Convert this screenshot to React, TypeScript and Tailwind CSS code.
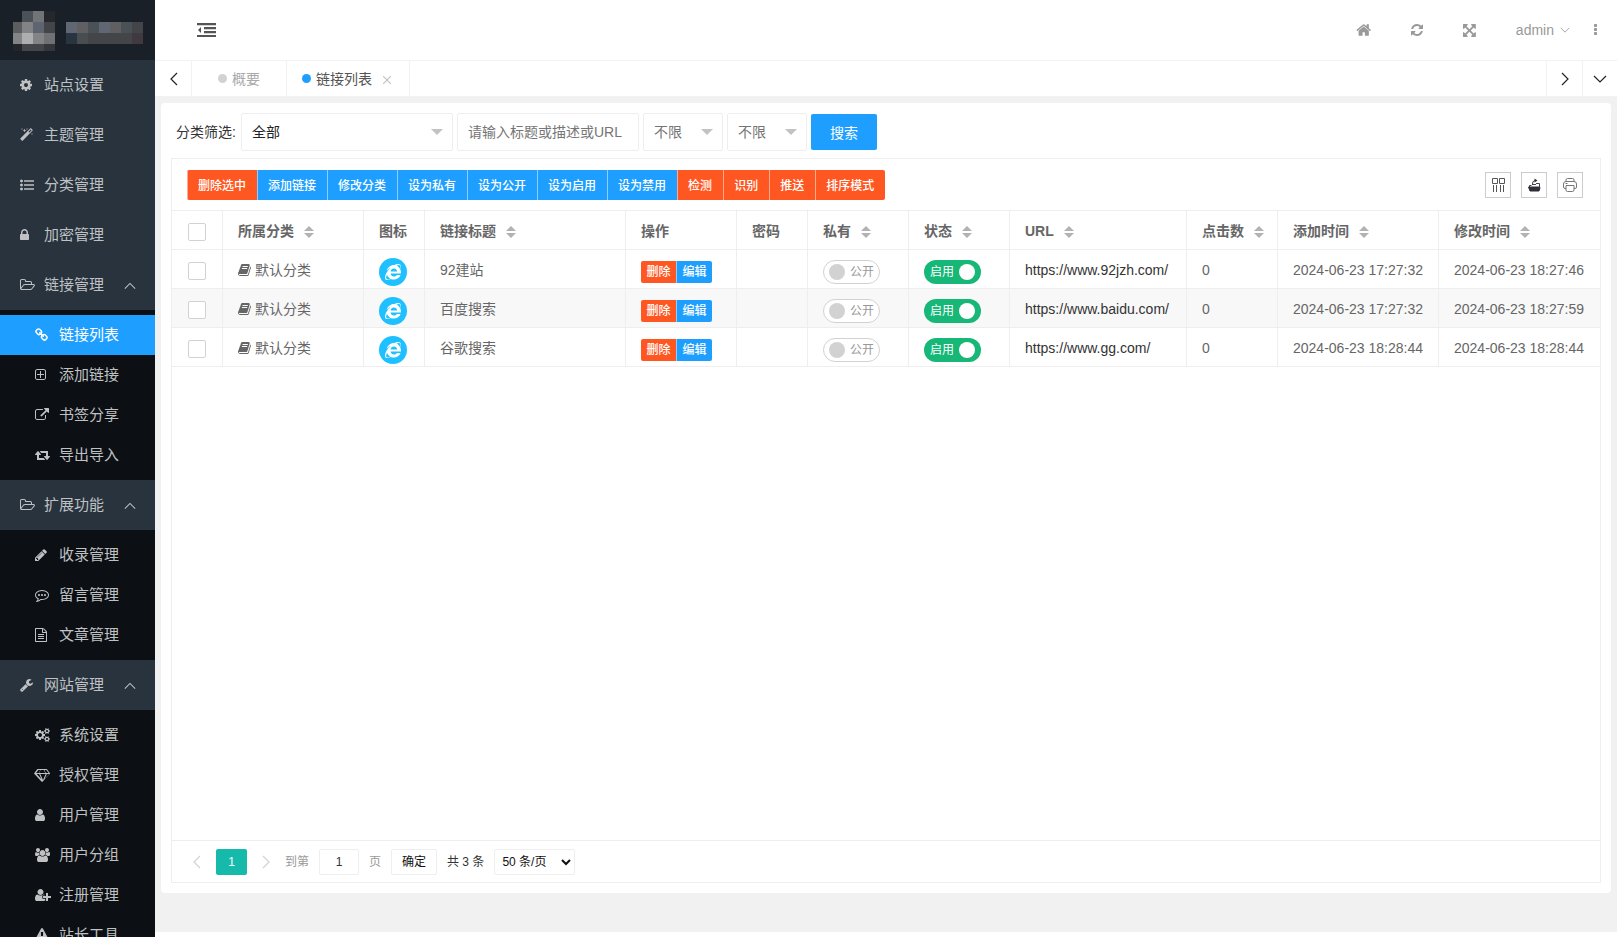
import * as React from "react";
import { FaInternetExplorer } from "react-icons/fa";

type IconName = keyof typeof ICONS;

// x: left edge of the glyph, w: advance width, d: outline on a 1792 unit em
const ICONS = {
  cog: {
    x: 128,
    w: 1536,
    d: "M1152 896q0-106-75-181t-181-75-181 75-75 181 75 181 181 75 181-75 75-181zm512-109v222q0 12-8 23t-20 13l-185 28q-19 54-39 91 35 50 107 138 10 12 10 25t-9 23q-27 37-99 108t-94 71q-12 0-26-9l-138-108q-44 23-91 38-16 136-29 186-7 28-36 28h-222q-14 0-24.5-8.5t-11.5-21.5l-28-184q-49-16-90-37l-141 107q-10 9-25 9-14 0-25-11-126-114-165-168-7-10-7-23 0-12 8-23 15-21 51-66.5t54-70.5q-27-50-41-99l-183-27q-13-2-21-12.5t-8-23.5v-222q0-12 8-23t19-13l186-28q14-46 39-92-40-57-107-138-10-12-10-24 0-10 9-23 26-36 98.5-107.5t94.5-71.5q13 0 26 10l138 107q44-23 91-38 16-136 29-186 7-28 36-28h222q14 0 24.5 8.5t11.5 21.5l28 184q49 16 90 37l142-107q9-9 24-9 13 0 25 10 129 119 165 170 7 8 7 22 0 12-8 23-15 21-51 66.5t-54 70.5q26 50 41 98l183 28q13 2 21 12.5t8 23.5z",
  },
  magic: {
    x: 64,
    w: 1664,
    d: "M1254 581l293-293-107-107-293 293zm447-293q0 27-18 45l-1286 1286q-18 18-45 18t-45-18l-198-198q-18-18-18-45t18-45l1286-1286q18-18 45-18t45 18l198 198q18 18 18 45zm-1351-190l98 30-98 30-30 98-30-98-98-30 98-30 30-98zm350 162l196 60-196 60-60 196-60-196-196-60 196-60 60-196zm930 478l98 30-98 30-30 98-30-98-98-30 98-30 30-98zm-640-640l98 30-98 30-30 98-30-98-98-30 98-30 30-98z",
  },
  list: {
    x: 0,
    w: 1792,
    d: "M384 1408q0 80-56 136t-136 56-136-56-56-136 56-136 136-56 136 56 56 136zm0-512q0 80-56 136t-136 56-136-56-56-136 56-136 136-56 136 56 56 136zm0-512q0 80-56 136t-136 56-136-56-56-136 56-136 136-56 136 56 56 136zM512 288h1248q32 0 32 32v128q0 32-32 32h-1248zM512 800h1248q32 0 32 32v128q0 32-32 32h-1248zM512 1312h1248q32 0 32 32v128q0 32-32 32h-1248z",
  },
  lock: {
    x: 320,
    w: 1152,
    d: "M640 768h512v-192q0-106-75-181t-181-75-181 75-75 181v192zm832 96v576q0 40-28 68t-68 28h-960q-40 0-68-28t-28-68v-576q0-40 28-68t68-28h32v-192q0-184 132-316t316-132 316 132 132 316v192h32q40 0 68 28t28 68z",
  },
  folder: {
    x: 64,
    w: 1920,
    d: "M1845 931q0-35-53-35h-1088q-40 0-85.5 21.5t-71.5 52.5l-294 363q-18 24-18 40 0 35 53 35h1088q40 0 86-22t71-53l294-363q18-22 18-39zm-1141-163h768v-160q0-40-28-68t-68-28h-576q-40 0-68-28t-28-68v-64q0-40-28-68t-68-28h-320q-40 0-68 28t-28 68v853l256-315q44-53 116-87.5t140-34.5zm1269 163q0 62-46 120l-295 363q-43 53-116 87.5t-140 34.5h-1088q-92 0-158-66t-66-158v-960q0-92 66-158t158-66h320q92 0 158 66t66 158v32h544q92 0 158 66t66 158v160h192q54 0 99 24.5t67 70.5q15 32 15 68z",
  },
  link: {
    x: 64,
    w: 1664,
    d: "M1520 1216q0-40-28-68l-208-208q-28-28-68-28-42 0-72 32 3 3 19 18.5t21.5 21.5 15 19 13 25.5 3.5 27.5q0 40-28 68t-68 28q-15 0-27.5-3.5t-25.5-13-19-15-21.5-21.5-18.5-19q-33 31-33 73 0 40 28 68l206 207q27 27 68 27 40 0 68-26l147-146q28-28 28-67zm-703-705q0-40-28-68l-206-207q-28-28-68-28-39 0-68 27l-147 146q-28 28-28 67 0 40 28 68l208 208q27 27 68 27 42 0 72-31-3-3-19-18.5t-21.5-21.5-15-19-13-25.5-3.5-27.5q0-40 28-68t68-28q15 0 27.5 3.5t25.5 13 19 15 21.5 21.5 18.5 19q33-31 33-73zm895 705q0 120-85 203l-147 146q-83 83-203 83-121 0-204-85l-206-207q-83-83-83-203 0-123 88-209l-88-88q-86 88-208 88-120 0-204-84l-208-208q-84-84-84-204t85-203l147-146q83-83 203-83 121 0 204 85l206 207q83 83 83 203 0 123-88 209l88 88q86-88 208-88 120 0 204 84l208 208q84 84 84 204z",
  },
  plusSquare: {
    x: 192,
    w: 1408,
    d: "M1344 800v64q0 14-9 23t-23 9h-352v352q0 14-9 23t-23 9h-64q-14 0-23-9t-9-23v-352h-352q-14 0-23-9t-9-23v-64q0-14 9-23t23-9h352v-352q0-14 9-23t23-9h64q14 0 23 9t9 23v352h352q14 0 23 9t9 23zm128 448v-832q0-66-47-113t-113-47h-832q-66 0-113 47t-47 113v832q0 66 47 113t113 47h832q66 0 113-47t47-113zm128-832v832q0 119-84.5 203.5t-203.5 84.5h-832q-119 0-203.5-84.5t-84.5-203.5v-832q0-119 84.5-203.5t203.5-84.5h832q119 0 203.5 84.5t84.5 203.5z",
  },
  external: {
    x: 0,
    w: 1792,
    d: "M1408 928v320q0 119-84.5 203.5t-203.5 84.5h-832q-119 0-203.5-84.5t-84.5-203.5v-832q0-119 84.5-203.5t203.5-84.5h704q14 0 23 9t9 23v64q0 14-9 23t-23 9h-704q-66 0-113 47t-47 113v832q0 66 47 113t113 47h832q66 0 113-47t47-113v-320q0-14 9-23t23-9h64q14 0 23 9t9 23zm384-864v512q0 26-19 45t-45 19-45-19l-176-176-652 652q-10 10-23 10t-23-10l-114-114q-10-10-10-23t10-23l652-652-176-176q-19-19-19-45t19-45 45-19h512q26 0 45 19t19 45z",
  },
  retweet: {
    x: 0,
    w: 1920,
    d: "M1280 1504q0 13-9.5 22.5t-22.5 9.5h-960q-8 0-13.5-2t-9-7-5.5-8-3-11.5-1-11.5v-600h-192q-26 0-45-19t-19-45q0-24 15-41l320-384q19-22 49-22t49 22l320 384q15 17 15 41 0 26-19 45t-45 19h-192v384h576q16 0 25 11l160 192q7 10 7 21zm640-416q0 24-15 41l-320 384q-20 23-49 23t-49-23l-320-384q-15-17-15-41 0-26 19-45t45-19h192v-384h-576q-16 0-25-12l-160-192q-7-9-7-20 0-13 9.5-22.5t22.5-9.5h960q8 0 13.5 2t9 7 5.5 8 3 11.5 1 11.5v600h192q26 0 45 19t19 45z",
  },
  pencil: {
    x: 128,
    w: 1536,
    d: "M491 1536l91-91-235-235-91 91v107h128v128h107zm523-928q0-22-22-22-10 0-17 7l-542 542q-7 7-7 17 0 22 22 22 10 0 17-7l542-542q7-7 7-17zm-54-192l416 416-832 832h-416v-416zm683 96q0 53-37 90l-166 166-416-416 166-165q36-38 90-38 53 0 91 38l235 234q37 39 37 91z",
  },
  comment: {
    x: 0,
    w: 1792,
    d: "M640 896q0 53-37.5 90.5t-90.5 37.5-90.5-37.5-37.5-90.5 37.5-90.5 90.5-37.5 90.5 37.5 37.5 90.5zm384 0q0 53-37.5 90.5t-90.5 37.5-90.5-37.5-37.5-90.5 37.5-90.5 90.5-37.5 90.5 37.5 37.5 90.5zm384 0q0 53-37.5 90.5t-90.5 37.5-90.5-37.5-37.5-90.5 37.5-90.5 90.5-37.5 90.5 37.5 37.5 90.5zm-512-512q-204 0-381.5 69.5t-282 187.5-104.5 255q0 112 71.5 213.5t201.5 175.5l87 50-27 96q-24 91-70 172 152-63 275-171l43-38 57 6q69 8 130 8 204 0 381.5-69.5t282-187.5 104.5-255-104.5-255-282-187.5-381.5-69.5zm896 512q0 174-120 321.5t-326 233-450 85.5q-70 0-145-8-198 175-460 242-49 14-114 22h-5q-15 0-27-10.5t-16-27.5v-1q-3-4-.5-12t2-10 4.5-9.5l6-9 7-8.5 8-9q7-8 31-34.5t34.5-38 31-39.5 32.5-51 27-59 26-76q-157-89-247.5-220t-90.5-281q0-174 120-321.5t326-233 450-85.5 450 85.5 326 233 120 321.5z",
  },
  file: {
    x: 128,
    w: 1536,
    d: "M1596 380q28 28 48 76t20 88v1152q0 40-28 68t-68 28h-1344q-40 0-68-28t-28-68v-1600q0-40 28-68t68-28h896q40 0 88 20t76 48zm-444-244v376h376q-10-29-22-41l-313-313q-12-12-41-22zm384 1528v-1024h-416q-40 0-68-28t-28-68v-416h-768v1536h1280zm-1024-864q0-14 9-23t23-9h704q14 0 23 9t9 23v64q0 14-9 23t-23 9h-704q-14 0-23-9t-9-23v-64zm736 224q14 0 23 9t9 23v64q0 14-9 23t-23 9h-704q-14 0-23-9t-9-23v-64q0-14 9-23t23-9h704zm0 256q14 0 23 9t9 23v64q0 14-9 23t-23 9h-704q-14 0-23-9t-9-23v-64q0-14 9-23t23-9h704z",
  },
  wrench: {
    x: 64,
    w: 1664,
    d: "M448 1472q0-26-19-45t-45-19-45 19-19 45 19 45 45 19 45-19 19-45zm644-420l-682 682q-37 37-90 37-52 0-91-37l-106-108q-38-36-38-90 0-53 38-91l681-681q39 98 114.5 173.5t173.5 114.5zm634-435q0 39-23 106-47 134-164.5 217.5t-258.5 83.5q-185 0-316.5-131.5t-131.5-316.5 131.5-316.5 316.5-131.5q58 0 121.5 16.5t107.5 46.5q16 11 16 28t-16 28l-293 169v224l193 107q5-3 79-48.5t135.5-81 70.5-35.5q15 0 23.5 10t8.5 25z",
  },
  cogs: {
    x: 0,
    w: 1920,
    d: "M896 896q0-106-75-181t-181-75-181 75-75 181 75 181 181 75 181-75 75-181zm768 512q0-52-38-90t-90-38-90 38-38 90q0 53 37.5 90.5t90.5 37.5 90.5-37.5 37.5-90.5zm0-1024q0-52-38-90t-90-38-90 38-38 90q0 53 37.5 90.5t90.5 37.5 90.5-37.5 37.5-90.5zm-384 421v185q0 10-7 19.5t-16 10.5l-155 24q-11 35-32 76 34 48 90 115 7 11 7 20 0 12-7 19-23 30-82.5 89.5t-78.5 59.5q-11 0-21-7l-115-90q-37 19-77 31-11 108-23 155-7 24-30 24h-186q-11 0-20-7.5t-10-17.5l-23-153q-34-10-75-31l-118 89q-7 7-20 7-11 0-21-8-144-133-144-160 0-9 7-19 10-14 41-53t47-61q-23-44-35-82l-152-24q-10-1-17-9.5t-7-19.5v-185q0-10 7-19.5t16-10.5l155-24q11-35 32-76-34-48-90-115-7-11-7-20 0-12 7-20 22-30 82-89t79-59q11 0 21 7l115 90q34-18 77-32 11-108 23-154 7-24 30-24h186q11 0 20 7.5t10 17.5l23 153q34 10 75 31l118-89q8-7 20-7 11 0 21 8 144 133 144 160 0 8-7 19-12 16-42 54t-45 60q23 48 34 82l152 23q10 2 17 10.5t7 19.5zm640 533v140q0 16-149 31-12 27-30 52 51 113 51 138 0 4-4 7-122 71-124 71-8 0-46-47t-52-68q-20 2-30 2t-30-2q-14 21-52 68t-46 47q-2 0-124-71-4-3-4-7 0-25 51-138-18-25-30-52-149-15-149-31v-140q0-16 149-31 13-29 30-52-51-113-51-138 0-4 4-7 4-2 35-20t59-34 30-16q8 0 46 46.5t52 67.5q20-2 30-2t30 2q51-71 92-112l6-2q4 0 124 70 4 3 4 7 0 25-51 138 17 23 30 52 149 15 149 31zm0-1024v140q0 16-149 31-12 27-30 52 51 113 51 138 0 4-4 7-122 71-124 71-8 0-46-47t-52-68q-20 2-30 2t-30-2q-14 21-52 68t-46 47q-2 0-124-71-4-3-4-7 0-25 51-138-18-25-30-52-149-15-149-31v-140q0-16 149-31 13-29 30-52-51-113-51-138 0-4 4-7 4-2 35-20t59-34 30-16q8 0 46 46.5t52 67.5q20-2 30-2t30 2q51-71 92-112l6-2q4 0 124 70 4 3 4 7 0 25-51 138 17 23 30 52 149 15 149 31z",
  },
  diamond: {
    x: 0,
    w: 2048,
    d: "M212 768l623 665-300-665h-323zm812 772l349-772h-698zm-538-900l204-384h-262l-288 384h346zm727 793l623-665h-323zm-683-793h788l-204-384h-380zm861 0h346l-288-384h-262zm141-487l384 512q14 18 13 41.5t-17 40.5l-960 1024q-18 20-47 20t-47-20l-960-1024q-16-17-17-40.5t13-41.5l384-512q18-25 51-25h1152q33 0 51 25z",
  },
  user: {
    x: 256,
    w: 1280,
    d: "M1536 1399q0 109-62.5 187t-150.5 78h-854q-88 0-150.5-78t-62.5-187q0-85 8.5-160.5t31.5-152 58.5-131 94-89 134.5-34.5q131 128 313 128t313-128q76 0 134.5 34.5t94 89 58.5 131 31.5 152 8.5 160.5zm-256-887q0 159-112.5 271.5t-271.5 112.5-271.5-112.5-112.5-271.5 112.5-271.5 271.5-112.5 271.5 112.5 112.5 271.5z",
  },
  group: {
    x: 0,
    w: 1920,
    d: "M593 896q-162 5-265 128h-134q-82 0-138-40.5t-56-118.5q0-353 124-353 6 0 43.5 21t97.5 42.5 119 21.5q67 0 133-23-5 37-5 66 0 159 81 256zm1071 637q0 120-73 189.5t-194 69.5h-874q-121 0-194-69.5t-73-189.5q0-53 3.5-103.5t14-109 26.5-108.5 43-97.5 62-81 85.5-53.5 111.5-20q10 0 43 21.5t73 48 107 48 135 21.5 135-21.5 107-48 73-48 43-21.5q61 0 111.5 20t85.5 53.5 62 81 43 97.5 26.5 108.5 14 109 3.5 103.5zm-1024-1277q0 106-75 181t-181 75-181-75-75-181 75-181 181-75 181 75 75 181zm704 384q0 159-112.5 271.5t-271.5 112.5-271.5-112.5-112.5-271.5 112.5-271.5 271.5-112.5 271.5 112.5 112.5 271.5zm576 225q0 78-56 118.5t-138 40.5h-134q-103-123-265-128 93-134 93-293 0-29-5-66 66 23 133 23 59 0 119-21.5t97.5-42.5 43.5-21q124 0 124 353zm-128-609q0 106-75 181t-181 75-181-75-75-181 75-181 181-75 181 75 75 181z",
  },
  userPlus: {
    x: 0,
    w: 2048,
    d: "M704 896q-159 0-271.5-112.5t-112.5-271.5 112.5-271.5 271.5-112.5 271.5 112.5 112.5 271.5-112.5 271.5-271.5 112.5zm960 128h352q13 0 22.5 9.5t9.5 22.5v192q0 13-9.5 22.5t-22.5 9.5h-352v352q0 13-9.5 22.5t-22.5 9.5h-192q-13 0-22.5-9.5t-9.5-22.5v-352h-352q-13 0-22.5-9.5t-9.5-22.5v-192q0-13 9.5-22.5t22.5-9.5h352v-352q0-13 9.5-22.5t22.5-9.5h192q13 0 22.5 9.5t9.5 22.5v352zm-736 224q0 52 38 90t90 38h256v238q-68 50-171 50h-874q-121 0-194-69t-73-190q0-53 3.5-103.5t14-109 26.5-108.5 43-97.5 62-81 85.5-53.5 111.5-20q19 0 39 17 79 61 154.5 91.5t164.5 30.5 164.5-30.5 154.5-91.5q20-17 39-17 132 0 217 96h-223q-52 0-90 38t-38 90v192z",
  },
  warning: {
    x: 0,
    w: 1792,
    d: "M1024 1375v-190q0-14-9.5-23.5t-22.5-9.5h-192q-13 0-22.5 9.5t-9.5 23.5v190q0 14 9.5 23.5t22.5 9.5h192q13 0 22.5-9.5t9.5-23.5zm-2-374l18-459q0-12-10-19-13-11-24-11h-220q-11 0-24 11-10 7-10 21l17 457q0 10 10 16.5t24 6.5h185q14 0 23.5-6.5t10.5-16.5zm-14-934l768 1408q35 63-2 126-17 29-46.5 46t-63.5 17h-1536q-34 0-63.5-17t-46.5-46q-37-63-2-126l768-1408q17-31 47-49t65-18 65 18 47 49z",
  },
  home: {
    x: 32,
    w: 1728,
    d: "M1472 992v480q0 26-19 45t-45 19h-384v-384h-256v384h-384q-26 0-45-19t-19-45v-480q0-1 .5-3t.5-3l575-474 575 474q1 2 1 6zm223-69l-62 74q-8 9-21 11h-3q-13 0-21-7l-692-577-692 577q-12 8-24 7-13-2-21-11l-62-74q-8-10-7-23.5t11-21.5l719-599q32-26 76-26t76 26l244 204v-195q0-14 9-23t23-9h192q14 0 23 9t9 23v408l219 182q10 8 11 21.5t-7 23.5z",
  },
  refresh: {
    x: 128,
    w: 1536,
    d: "M1639 1056q0 5-1 7-64 268-268 434.5t-478 166.5q-146 0-282.5-55t-243.5-157l-129 129q-19 19-45 19t-45-19-19-45v-448q0-26 19-45t45-19h448q26 0 45 19t19 45-19 45l-137 137q71 66 161 102t187 36q134 0 250-65t186-179q11-17 53-117 8-23 30-23h192q13 0 22.5 9.5t9.5 22.5zm25-800v448q0 26-19 45t-45 19h-448q-26 0-45-19t-19-45 19-45l138-138q-148-137-349-137-134 0-250 65t-186 179q-11 17-53 117-8 23-30 23h-199q-13 0-22.5-9.5t-9.5-22.5v-7q65-268 270-434.5t480-166.5q146 0 284 55.5t245 156.5l130-129q19-19 45-19t45 19 19 45z",
  },
  arrows: {
    x: 128,
    w: 1536,
    d: "M1411 541l-355 355 355 355 144-144q29-31 70-14 39 17 39 59v448q0 26-19 45t-45 19h-448q-42 0-59-40-17-39 14-69l144-144-355-355-355 355 144 144q31 30 14 69-17 40-59 40h-448q-26 0-45-19t-19-45v-448q0-42 40-59 39-17 69 14l144 144 355-355-355-355-144 144q-19 19-45 19-12 0-24-5-40-17-40-59v-448q0-26 19-45t45-19h448q42 0 59 40 17 39-14 69l-144 144 355 355 355-355-144-144q-31-30-14-69 17-40 59-40h448q26 0 45 19t19 45v448q0 42-39 59-13 5-25 5-26 0-45-19z",
  },
  ellipsis: {
    x: 704,
    w: 384,
    d: "M1088 1248v192q0 40-28 68t-68 28h-192q-40 0-68-28t-28-68v-192q0-40 28-68t68-28h192q40 0 68 28t28 68zm0-512v192q0 40-28 68t-68 28h-192q-40 0-68-28t-28-68v-192q0-40 28-68t68-28h192q40 0 68 28t28 68zm0-512v192q0 40-28 68t-68 28h-192q-40 0-68-28t-28-68v-192q0-40 28-68t68-28h192q40 0 68 28t28 68z",
  },
  book: {
    x: 64,
    w: 1664,
    d: "M1703 478q40 57 18 129l-275 906q-19 64-76.5 107.5t-122.5 43.5h-923q-77 0-148.5-53.5t-99.5-131.5q-24-67-2-127 0-4 3-27t4-37q1-8-3-21.5t-3-19.5q2-11 8-21t16.5-23.5 16.5-23.5q23-38 45-91.5t30-91.5q3-10 .5-30t-.5-28q3-11 17-28t17-23q21-36 42-92t25-90q1-9-2.5-32t.5-28q4-13 22-30.5t22-22.5q19-26 42.5-84.5t27.5-96.5q1-8-3-25.5t-2-26.5q2-8 9-18t18-23 17-21q8-12 16.5-30.5t15-35 16-36 19.5-32 26.5-23.5 36-11.5 47.5 5.5l-1 3q38-9 51-9h761q74 0 114 56t18 130l-274 906q-36 119-71.5 153.5t-128.5 34.5h-869q-27 0-38 15-11 16-1 43 24 70 144 70h923q29 0 56-15.5t35-41.5l300-987q7-22 5-57 38 15 59 43zm-1064 2q-4 13 2 22.5t20 9.5h608q13 0 25.5-9.5t16.5-22.5l21-64q4-13-2-22.5t-20-9.5h-608q-13 0-25.5 9.5t-16.5 22.5zm-83 256q-4 13 2 22.5t20 9.5h608q13 0 25.5-9.5t16.5-22.5l21-64q4-13-2-22.5t-20-9.5h-608q-13 0-25.5 9.5t-16.5 22.5z",
  },
};

function Icon({ name, className = "h-3.5" }: { name: IconName; className?: string }) {
  const { x, w, d } = ICONS[name];
  return (
    <svg
      viewBox={`${x} 0 ${w} 1792`}
      className={`w-auto shrink-0 overflow-visible ${className}`}
      fill="currentColor"
      aria-hidden="true"
    >
      <path d={d} />
    </svg>
  );
}

const CHEVRONS = {
  up: "M1 10l6-6 6 6",
  down: "M1 4l6 6 6-6",
  left: "M10 1l-6 6 6 6",
  right: "M4 1l6 6-6 6",
};

function Chevron({ dir, className }: { dir: keyof typeof CHEVRONS; className: string }) {
  return (
    <svg viewBox="0 0 14 14" className={className} fill="none" stroke="currentColor" strokeWidth="1.2" aria-hidden="true">
      <path d={CHEVRONS[dir]} />
    </svg>
  );
}

interface IMenuItem {
  icon: IconName;
  label: string;
  children?: { icon: IconName; label: string }[];
}

const menu: IMenuItem[] = [
  { icon: "cog", label: "站点设置" },
  { icon: "magic", label: "主题管理" },
  { icon: "list", label: "分类管理" },
  { icon: "lock", label: "加密管理" },
  {
    icon: "folder",
    label: "链接管理",
    children: [
      { icon: "link", label: "链接列表" },
      { icon: "plusSquare", label: "添加链接" },
      { icon: "external", label: "书签分享" },
      { icon: "retweet", label: "导出导入" },
    ],
  },
  {
    icon: "folder",
    label: "扩展功能",
    children: [
      { icon: "pencil", label: "收录管理" },
      { icon: "comment", label: "留言管理" },
      { icon: "file", label: "文章管理" },
    ],
  },
  {
    icon: "wrench",
    label: "网站管理",
    children: [
      { icon: "cogs", label: "系统设置" },
      { icon: "diamond", label: "授权管理" },
      { icon: "user", label: "用户管理" },
      { icon: "group", label: "用户分组" },
      { icon: "userPlus", label: "注册管理" },
      { icon: "warning", label: "站长工具" },
    ],
  },
];

// Pixelated logo, each cell is [x, y, width, height, fill]
const logoCells: [number, number, number, number, string][] = [
  [22, 11, 11, 11, "#4b5257"],
  [33, 11, 11, 11, "#717578"],
  [44, 11, 11, 11, "#24282c"],
  [13, 22, 9, 11, "#5c5d5f"],
  [22, 22, 11, 11, "#828385"],
  [33, 22, 11, 11, "#5f6570"],
  [44, 22, 11, 11, "#434549"],
  [13, 33, 9, 11, "#838486"],
  [22, 33, 11, 11, "#adaeb0"],
  [33, 33, 11, 11, "#838486"],
  [44, 33, 11, 11, "#6f7173"],
  [13, 44, 9, 7, "#22262a"],
  [22, 44, 22, 7, "#434549"],
  [44, 44, 11, 7, "#35353c"],
  [66, 22, 11, 11, "#616772"],
  [77, 22, 11, 11, "#606062"],
  [88, 22, 11, 11, "#4b5257"],
  [99, 22, 11, 11, "#616772"],
  [110, 22, 11, 11, "#606062"],
  [121, 22, 11, 11, "#4b5257"],
  [132, 22, 11, 11, "#434549"],
  [66, 33, 11, 11, "#283440"],
  [77, 33, 11, 11, "#484e50"],
  [88, 33, 44, 11, "#434549"],
  [132, 33, 11, 11, "#40393f"],
];

const toolbar = [
  { label: "删除选中", color: "bg-[#ff5722]" },
  { label: "添加链接", color: "bg-[#1e9fff]" },
  { label: "修改分类", color: "bg-[#1e9fff]" },
  { label: "设为私有", color: "bg-[#1e9fff]" },
  { label: "设为公开", color: "bg-[#1e9fff]" },
  { label: "设为启用", color: "bg-[#1e9fff]" },
  { label: "设为禁用", color: "bg-[#1e9fff]" },
  { label: "检测", color: "bg-[#ff5722]" },
  { label: "识别", color: "bg-[#ff5722]" },
  { label: "推送", color: "bg-[#ff5722]" },
  { label: "排序模式", color: "bg-[#ff5722]" },
];

const columns = [
  { title: "所属分类", width: "w-[141px]", sort: true },
  { title: "图标", width: "w-[61px]", sort: false },
  { title: "链接标题", width: "w-[201px]", sort: true },
  { title: "操作", width: "w-[111px]", sort: false },
  { title: "密码", width: "w-[71px]", sort: false },
  { title: "私有", width: "w-[101px]", sort: true },
  { title: "状态", width: "w-[101px]", sort: true },
  { title: "URL", width: "w-[177px]", sort: true },
  { title: "点击数", width: "w-[91px]", sort: true },
  { title: "添加时间", width: "w-[161px]", sort: true },
  { title: "修改时间", width: "", sort: true },
];

const links = [
  { title: "92建站", url: "https://www.92jzh.com/", clicks: 0, added: "2024-06-23 17:27:32", updated: "2024-06-23 18:27:46" },
  { title: "百度搜索", url: "https://www.baidu.com/", clicks: 0, added: "2024-06-23 17:27:32", updated: "2024-06-23 18:27:59" },
  { title: "谷歌搜索", url: "https://www.gg.com/", clicks: 0, added: "2024-06-23 18:28:44", updated: "2024-06-23 18:28:44" },
];

function Sidebar() {
  return (
    <aside className="w-[155px] shrink-0 overflow-hidden bg-[#0c0f13] text-[15px] text-[#bfc1c3]">
      <div className="h-[60px] bg-[#192027]">
        <svg viewBox="0 0 155 60" className="h-[60px] w-[155px]" shapeRendering="crispEdges" role="img" aria-label="logo">
          {logoCells.map(([x, y, w, h, fill]) => (
            <rect key={`${x}-${y}`} x={x} y={y} width={w} height={h} fill={fill} />
          ))}
        </svg>
      </div>
      <nav>
        {menu.map((item) => (
          <div key={item.label}>
            <a href="#" className="flex h-[50px] items-center bg-[#28333e] pr-[19px] pl-5">
              <span className="w-6">
                <Icon name={item.icon} />
              </span>
              <span className="grow">{item.label}</span>
              {item.children && <Chevron dir="up" className="mt-0.5 size-3" />}
            </a>
            {item.children && (
              <div className="py-[5px]">
                {item.children.map((child) => (
                  <a
                    key={child.label}
                    href="#"
                    className={`flex h-10 items-center pl-[35px] ${child.label === "链接列表" ? "bg-[#1e9fff] text-white" : ""}`}
                  >
                    <span className="w-6">
                      <Icon name={child.icon} />
                    </span>
                    {child.label}
                  </a>
                ))}
              </div>
            )}
          </div>
        ))}
      </nav>
    </aside>
  );
}

function Header() {
  return (
    <header className="flex h-[60px] items-center justify-between pl-[42px] text-sm text-[#999]">
      <button type="button" aria-label="收起菜单" className="text-[#555]">
        <svg viewBox="0 0 19 14" className="h-3.5 w-[19px]" fill="currentColor">
          <path d="M0 0h19v2.300H0zM7 4h12v2.300H7zM7 8h12v2.300H7zM0 12h19v2.300H0z" />
          <path d="M4 4v6L1 7z" />
        </svg>
      </button>
      <div className="flex h-full items-center">
        <button type="button" aria-label="首页" className="h-full px-5">
          <Icon name="home" className="h-4" />
        </button>
        <button type="button" aria-label="刷新" className="h-full px-5">
          <Icon name="refresh" className="h-3.5" />
        </button>
        <button type="button" aria-label="全屏" className="h-full px-5">
          <Icon name="arrows" className="h-[15px]" />
        </button>
        <button type="button" className="flex h-full items-center gap-1.5 pl-5">
          admin
          <Chevron dir="down" className="size-2.5" />
        </button>
        <button type="button" aria-label="更多" className="h-full pr-5 pl-6">
          <Icon name="ellipsis" className="h-3.5" />
        </button>
      </div>
    </header>
  );
}

function Tabs() {
  return (
    <div className="flex h-[37px] items-stretch border-y border-[#f2f2f2] text-sm">
      <button type="button" aria-label="向左" className="flex w-[37px] items-center justify-center border-r border-[#f2f2f2] pl-px text-[#222]">
        <Chevron dir="left" className="size-3.5" />
      </button>
      <a href="#" className="flex items-center gap-[5px] border-r border-[#f2f2f2] px-[26px] text-[#aaa]">
        <span className="size-[9px] rounded-full bg-[#d2d2d2]" />
        概要
      </a>
      <div className="flex items-center border-r border-[#f2f2f2] pr-[18px] pl-[15px]">
        <a href="#" className="flex items-center gap-[5px] text-[#555]">
          <span className="size-[9px] rounded-full bg-[#1e9fff]" />
          链接列表
        </a>
        <button type="button" aria-label="关闭" className="ml-[11px] text-[#c2c2c2]">
          <svg viewBox="0 0 8 8" className="mt-0.5 size-2" stroke="currentColor" strokeWidth="1.2">
            <path d="M0 0l8 8M8 0l-8 8" />
          </svg>
        </button>
      </div>
      <div className="grow" />
      <button type="button" aria-label="向右" className="flex w-9 items-center justify-center border-l border-[#f2f2f2] text-[#222]">
        <Chevron dir="right" className="size-3.5" />
      </button>
      <button type="button" aria-label="页签操作" className="flex w-[35px] items-center justify-center border-l border-[#f2f2f2] text-[#222]">
        <Chevron dir="down" className="size-3.5" />
      </button>
    </div>
  );
}

interface IFilterSelectProps {
  label: string;
  id: string;
  option: string;
  className: string;
}

function FilterSelect({ label, id, option, className }: IFilterSelectProps) {
  return (
    <div className={`relative ${className}`}>
      <select
        id={id}
        aria-label={label}
        className="h-[38px] w-full appearance-none rounded-xs border border-[#eee] bg-white px-2.5"
      >
        <option>{option}</option>
      </select>
      <span className="pointer-events-none absolute top-4 right-2.5 border-x-6 border-t-6 border-x-transparent border-t-[#c2c2c2]" />
    </div>
  );
}

function Filters() {
  return (
    <form className="flex items-center gap-1 pb-[7px] pl-[5px] text-sm" onSubmit={(e) => e.preventDefault()}>
      <label htmlFor="category" className="w-[61px] whitespace-nowrap text-[#333]">
        分类筛选:
      </label>
      <FilterSelect id="category" label="分类筛选" option="全部" className="w-[212px] text-[#222]" />
      <input
        type="text"
        aria-label="关键词"
        placeholder="请输入标题或描述或URL"
        className="h-[38px] w-[182px] rounded-xs border border-[#eee] px-2.5 placeholder:text-[#757575]"
      />
      <FilterSelect id="private" label="私有" option="不限" className="w-20 text-[#757575]" />
      <FilterSelect id="status" label="状态" option="不限" className="w-20 text-[#757575]" />
      <button type="submit" className="h-9 w-[66px] rounded-xs bg-[#1e9fff] pt-0.5 text-white">
        搜索
      </button>
    </form>
  );
}

function Toolbar() {
  return (
    <div className="flex h-[52px] items-center justify-between border-b border-[#eee] pr-[17px] pl-[15px]">
      <div className="flex overflow-hidden rounded-xs text-xs font-medium text-white">
        {toolbar.map((btn) => (
          <button key={btn.label} type="button" className={`h-[30px] border-l border-white/50 pt-0.5 pr-[11px] pl-2.5 ${btn.color}`}>
            {btn.label}
          </button>
        ))}
      </div>
      <div className="flex gap-2.5 text-[#555]">
        <button type="button" aria-label="筛选列" className="flex size-[26px] items-center justify-center border border-[#ccc]">
          <svg viewBox="0 0 16 16" className="size-4" fill="none" stroke="currentColor">
            <path d="M2.5 1.5h5v5h-5zM9.500 1.500h5v5h-5zM3.500 8v7M6.500 8v7M10.500 8v7M13.500 8v7" />
          </svg>
        </button>
        <button type="button" aria-label="导出" className="flex size-[26px] items-center justify-center border border-[#ccc] text-[#2f3038]">
          <svg viewBox="0 0 16 16" className="size-4" fill="none" stroke="currentColor">
            <path d="M2.500 10h11l.5 1-1 3H4z" fill="currentColor" />
            <path d="M10 6.500h3.500V10M3.500 10V8.500h2M6.500 7.500Q6 4 9 3.500M6 7.500h4" strokeWidth="0.9" />
            <path d="M8.500 1.500L11.500 3.500 8.500 5.500z" fill="currentColor" stroke="none" />
          </svg>
        </button>
        <button type="button" aria-label="打印" className="flex size-[26px] items-center justify-center border border-[#ccc] text-[#777]">
          <svg viewBox="0 0 16 16" className="size-4" fill="none" stroke="currentColor">
            <path d="M4 4.500V3q0-1.500 1.500-1.500h5Q12 1.500 12 3v1.500M4 11.500H3q-1.500 0-1.500-1.500V7Q1.500 4.500 4 4.500h8q2.500 0 2.500 2.500v3q0 1.500-1.500 1.500h-1M4 8.500h8v4.500q0 1.500-1.500 1.500h-5Q4 14.500 4 13z" />
            <path d="M3.500 6.500h2" />
          </svg>
        </button>
      </div>
    </div>
  );
}

function Checkbox({ label }: { label: string }) {
  return (
    <input
      type="checkbox"
      aria-label={label}
      className="mt-0.5 block size-[18px] appearance-none rounded-xs border border-[#d2d2d2] bg-white checked:bg-[#1e9fff]"
    />
  );
}

function LinkTable() {
  return (
    <table className="w-full table-fixed border-separate border-spacing-0 text-left text-sm text-[#666]">
      <thead>
        <tr className="h-[39px]">
          <th className="w-[51px] border-r border-b border-[#eee] pt-0.5 pl-4">
            <Checkbox label="全选" />
          </th>
          {columns.map((col) => (
            <th key={col.title} className={`border-b border-[#eee] pt-0.5 pl-[15px] font-bold not-last:border-r ${col.width}`}>
              <span className="flex items-center gap-2.5 whitespace-nowrap">
                {col.title}
                {col.sort && (
                  <span className="mt-0.5 flex flex-col gap-0.5">
                    <span className="border-x-5 border-b-5 border-x-transparent border-b-[#b2b2b2]" />
                    <span className="border-x-5 border-t-5 border-x-transparent border-t-[#b2b2b2]" />
                  </span>
                )}
              </span>
            </th>
          ))}
        </tr>
      </thead>
      <tbody>
        {links.map((link) => (
          <tr
            key={link.title}
            className="h-[39px] even:bg-[#f8f8f8] *:border-b *:border-[#eee] *:pt-0.5 *:pb-0 *:pl-[15px] *:whitespace-nowrap *:first:pl-4 *:not-last:border-r"
          >
            <td>
              <Checkbox label={link.title} />
            </td>
            <td>
              <span className="flex items-center gap-1">
                <Icon name="book" />
                默认分类
              </span>
            </td>
            <td>
              <span className="mt-1 flex size-7 items-center justify-center rounded-full bg-[#1ec0ff] text-white">
                <FaInternetExplorer className="size-4" />
              </span>
            </td>
            <td>{link.title}</td>
            <td>
              <div className="mt-1 flex w-[71px] overflow-hidden rounded-xs text-xs font-medium text-white">
                <button type="button" className="h-[22px] w-[35px] bg-[#ff5722]">
                  删除
                </button>
                <button type="button" className="h-[22px] w-9 border-l border-white/50 bg-[#1e9fff]">
                  编辑
                </button>
              </div>
            </td>
            <td />
            <td>
              <label className="mt-1 flex h-6 w-[57px] items-center gap-[5px] rounded-full border border-[#d2d2d2] bg-white pl-[5px] text-xs text-[#999]">
                <input type="checkbox" className="size-4 appearance-none rounded-full bg-[#d2d2d2]" />
                公开
              </label>
            </td>
            <td>
              <label className="mt-1 flex h-6 w-[57px] items-center gap-[5px] rounded-full bg-[#16b777] pl-1.5 text-xs text-white">
                启用
                <input type="checkbox" defaultChecked className="size-4 appearance-none rounded-full bg-white" />
              </label>
            </td>
            <td>
              <a href={link.url} className="text-[#333]">
                {link.url}
              </a>
            </td>
            <td>{link.clicks}</td>
            <td>{link.added}</td>
            <td>{link.updated}</td>
          </tr>
        ))}
      </tbody>
    </table>
  );
}

function Pagination() {
  const [page, setPage] = React.useState("1");

  return (
    <div className="flex h-[42px] items-center border-t border-[#eee] pl-[18px] text-xs text-[#333]">
      <button type="button" aria-label="上一页" className="text-[#d2d2d2]">
        <Chevron dir="left" className="size-3.5" />
      </button>
      <button type="button" className="ml-3 h-[26px] w-[31px] rounded-xs bg-[#16baaa] text-white">
        1
      </button>
      <button type="button" aria-label="下一页" className="ml-3 text-[#d2d2d2]">
        <Chevron dir="right" className="size-3.5" />
      </button>
      <label htmlFor="page" className="ml-3 text-[#999]">
        到第
      </label>
      <input
        id="page"
        type="text"
        value={page}
        onChange={(e) => setPage(e.target.value)}
        className="mx-2.5 h-[26px] w-10 rounded-xs border border-[#eee] text-center"
      />
      <span className="text-[#999]">页</span>
      <button type="button" className="mx-2.5 h-[26px] w-[46px] rounded-xs border border-[#eee] text-[#111]">
        确定
      </button>
      <span>共 3 条</span>
      <select aria-label="每页条数" className="ml-2.5 h-[26px] w-[81px] rounded-xs border border-[#eee] bg-white pl-[3px] text-[#111]">
        <option>50 条/页</option>
      </select>
    </div>
  );
}

export default function App() {
  return (
    <div className="flex h-screen overflow-hidden bg-white font-['Liberation_Sans','Noto_Sans_CJK_SC',sans-serif]">
      <Sidebar />
      <div className="flex min-w-0 grow flex-col">
        <Header />
        <Tabs />
        <main className="mb-[5px] flex min-h-0 grow flex-col bg-[#f1f1f1] px-1.5 pt-1.5 pb-[39px]">
          <div className="flex min-h-0 grow flex-col rounded-sm bg-white p-2.5">
            <Filters />
            <section className="flex min-h-0 grow flex-col border border-[#eee]">
              <Toolbar />
              <div className="min-h-0 grow">
                <LinkTable />
              </div>
              <Pagination />
            </section>
          </div>
        </main>
      </div>
    </div>
  );
}
